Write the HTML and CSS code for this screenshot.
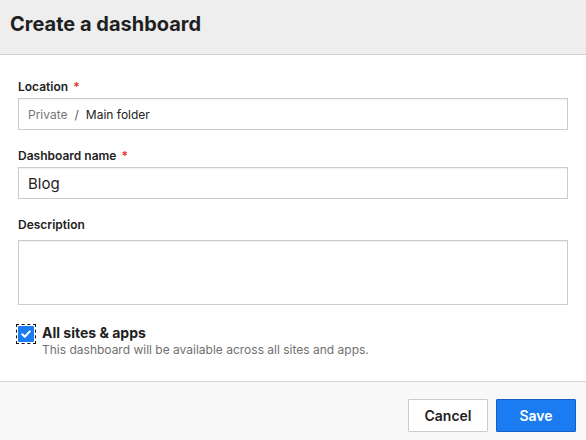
FILE: index.html
```html
<!DOCTYPE html>
<html>
<head>
<meta charset="utf-8">
<link rel="stylesheet" href="styles.css">
</head>
<body>
<div class="dialog">
  <header class="header">
    <h1 class="title">Create a dashboard</h1>
  </header>
  <main class="body">
    <div class="field">
      <label class="label">Location <span class="req">*</span></label>
      <div class="input path"><span class="muted">Private</span><span class="sep">/</span><span>Main folder</span></div>
    </div>
    <div class="field">
      <label class="label">Dashboard name <span class="req">*</span></label>
      <div class="input value">Blog</div>
    </div>
    <div class="field">
      <label class="label">Description</label>
      <div class="input textarea"></div>
    </div>
    <div class="check-row">
      <span class="check-focus">
        <span class="checkbox">
          <svg viewBox="0 0 16 16" width="16" height="16"><path d="M4.2 8.3 L6.8 10.8 L11.8 5.4" fill="none" stroke="#fff" stroke-width="2" stroke-linecap="round" stroke-linejoin="round"/></svg>
        </span>
      </span>
      <div class="check-text">
        <div class="check-title">All sites &amp; apps</div>
        <div class="check-desc">This dashboard will be available across all sites and apps.</div>
      </div>
    </div>
  </main>
  <footer class="footer">
    <button class="btn btn-secondary">Cancel</button>
    <button class="btn btn-primary">Save</button>
  </footer>
</div>
</body>
</html>
```
FILE: styles.css
```css
* { box-sizing: border-box; }
html, body { margin: 0; padding: 0; }
body {
  font-family: Inter, "Noto Sans", sans-serif;
  color: #222;
  background: #fff;
  width: 586px;
  height: 440px;
  overflow: hidden;
}
.dialog { display: flex; flex-direction: column; }
.header {
  height: 55px;
  background: #eeeeee;
  border-bottom: 1px solid #cfcfcf;
  padding: 12px 10px 0;
}
.title {
  margin: 0;
  font-size: 20px;
  line-height: 24px;
  font-weight: 700;
  color: #1f1f1f;
}
.body {
  padding: 24px 18px 23px;
  display: flex;
  flex-direction: column;
}
.field { display: flex; flex-direction: column; margin-bottom: 18px; }
.label {
  font-size: 12px;
  line-height: 16px;
  font-weight: 600;
  color: #222;
  margin-bottom: 3px;
}
.req { color: #e5342b; margin-left: 2px; }
.input {
  height: 32px;
  border: 1px solid #cccccc;
  box-shadow: inset 0 1px 1px rgba(0,0,0,0.06);
  background: #fff;
  display: flex;
  align-items: center;
  padding: 0 9px;
}
.path { font-size: 12px; color: #222; }
.muted { color: #777; }
.sep { color: #555; margin: 0 7px; }
.value { font-size: 15px; color: #222; }
.textarea { height: 65px; margin-top: 4px; }
.field:nth-child(3) { margin-bottom: 19px; }
.check-row { display: flex; align-items: flex-start; }
.check-focus {
  width: 20px;
  height: 20px;
  border: 1px dashed #111;
  padding: 1px;
  margin: 0 6px 0 -2px;
  display: flex;
}
.checkbox {
  width: 16px;
  height: 16px;
  background: #1a7cf0;
  border-radius: 1px;
  display: flex;
}
.check-text { display: flex; flex-direction: column; }
.check-title { font-size: 14px; line-height: 18px; font-weight: 700; color: #1f1f1f; }
.check-desc { font-size: 12px; line-height: 16px; color: #707070; }
.footer {
  border-top: 1px solid #d0d0d0;
  background: #f9f9f9;
  padding: 17px 10px 16px;
  display: flex;
  justify-content: flex-end;
  gap: 8px;
}
.btn {
  width: 80px;
  height: 33px;
  font-family: Inter, "Noto Sans", sans-serif;
  font-size: 14px;
  font-weight: 600;
  border-radius: 1px;
  padding: 0;
}
.btn-secondary {
  background: #fff;
  border: 1px solid #cccccc;
  color: #222;
}
.btn-primary {
  background: #1a7cf0;
  border: 1px solid #1560c8;
  color: #fff;
}
```
